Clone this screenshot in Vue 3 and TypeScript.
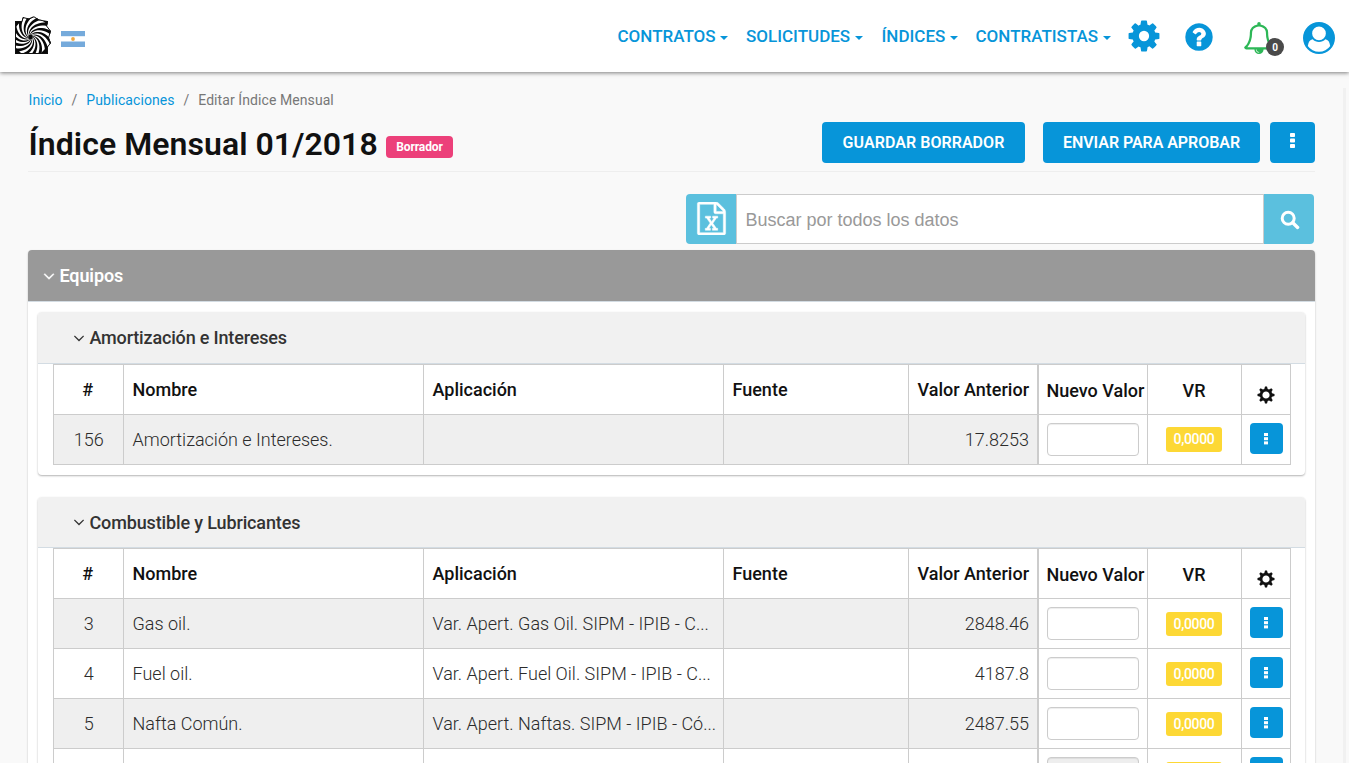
<script setup lang="ts">
interface Row {
  id: string
  nombre: string
  aplicacion: string
  anterior: string
  variacion: string
  disabled?: boolean
}
interface Group {
  title: string
  kind: string
  rows: Row[]
}

const menus: string[] = ['CONTRATOS', 'SOLICITUDES', 'ÍNDICES', 'CONTRATISTAS']

const groups: Group[] = [
  {
    title: 'Amortización e Intereses',
    kind: 'first',
    rows: [{ id: '156', nombre: 'Amortización e Intereses.', aplicacion: '', anterior: '17.8253', variacion: '0,0000' }],
  },
  {
    title: 'Combustible y Lubricantes',
    kind: 'second',
    rows: [
      { id: '3', nombre: 'Gas oil.', aplicacion: 'Var. Apert. Gas Oil. SIPM - IPIB - C...', anterior: '2848.46', variacion: '0,0000' },
      { id: '4', nombre: 'Fuel oil.', aplicacion: 'Var. Apert. Fuel Oil. SIPM - IPIB - C...', anterior: '4187.8', variacion: '0,0000' },
      { id: '5', nombre: 'Nafta Común.', aplicacion: 'Var. Apert. Naftas. SIPM - IPIB - Có...', anterior: '2487.55', variacion: '0,0000' },
      { id: '', nombre: '', aplicacion: '', anterior: '', variacion: '', disabled: true },
    ],
  },
]

// Spiral blades of the logo, from the hub outwards
const bladeCount = 14
function spiral(start: number, reach: number): string[] {
  const points: string[] = []
  for (let i = 0; i <= 14; i++) {
    const r = 1.5 + (reach * i) / 14
    const a = start + 2.1 * Math.sqrt(i / 14)
    points.push(`${(15.5 + r * Math.cos(a)).toFixed(2)} ${(21 + r * Math.sin(a)).toFixed(2)}`)
  }
  return points
}
const blades: string[] = Array.from({ length: bladeCount }, (_, n) => {
  const a = (n * 2 * Math.PI) / bladeCount
  const near = spiral(a, 23)
  const far = spiral(a + 0.23, 23).reverse()
  return `M${near.concat(far).join('L')}Z`
})

const teeth: number[] = [0, 45, 90, 135, 180, 225, 270, 315]
</script>

<template>
  <div class="page">
    <header class="topbar">
      <svg class="logo" width="38" height="40" viewBox="0 0 38 40">
        <defs>
          <clipPath id="logo-clip">
            <path d="M0 5H7L8 1L14 2.500L19 0L24 3.500L33 5L32 10L36 15L34 22L36 27L33 31V38H0Z" />
          </clipPath>
        </defs>
        <g clip-path="url(#logo-clip)">
          <rect width="38" height="40" fill="#fff" />
          <path v-for="(d, i) in blades" :key="i" :d="d" fill="#080808" />
          <path d="M0 5H6L0 12ZM28 5H33V9ZM33 30V38H25ZM0 31V38H7Z" fill="#080808" />
        </g>
        <path d="M.5 5.500V37.500H32.500V31L35.500 27L33.500 22L35.500 15L31.500 10L32.500 5.500L24 4L19 .8L14 3L8 1.500L7 5.500Z" fill="none" stroke="#111" stroke-width="1" />
        <circle cx="15.500" cy="21" r="2.200" fill="#080808" />
      </svg>
      <svg class="flag" width="24" height="16" viewBox="0 0 24 16">
        <rect width="24" height="16" fill="#fff" />
        <rect width="24" height="5.200" fill="#75aadb" />
        <rect y="10.500" width="24" height="5.500" fill="#75aadb" />
        <circle cx="12" cy="8" r="1.900" fill="#f0a840" />
      </svg>
      <nav class="menu">
        <a v-for="m in menus" :key="m" class="menu-item">{{ m }}<i class="caret"></i></a>
      </nav>
      <svg class="cog" width="36" height="36" viewBox="0 0 1792 1792"><path d="M1152 896q0-106-75-181t-181-75-181 75-75 181 75 181 181 75 181-75 75-181zm512-109v222q0 12-8 23t-20 13l-185 28q-19 54-39 91 35 50 107 138 10 12 10 25t-9 23q-27 37-99 108t-94 71q-12 0-26-9l-138-108q-44 23-91 38-16 136-29 186-7 28-36 28h-222q-14 0-24.500-8.500t-11.500-21.500l-28-184q-49-16-90-37l-141 107q-10 9-25 9-14 0-25-11-126-114-165-168-7-10-7-23 0-12 8-23 15-21 51-66.500t54-70.500q-27-50-41-99l-183-27q-13-2-21-12.500t-8-23.500v-222q0-12 8-23t19-13l186-28q14-46 39-92-40-57-107-138-10-12-10-24 0-10 9-23 26-36 98.500-107.500t94.500-71.500q13 0 26 10l138 107q44-23 91-38 16-136 29-186 7-28 36-28h222q14 0 24.500 8.500t11.500 21.500l28 184q49 16 90 37l142-107q9-9 24-9 13 0 25 10 129 119 165 170 7 8 7 22 0 12-8 23-15 21-51 66.500t-54 70.500q26 50 41 98l183 28q13 2 21 12.500t8 23.500z" fill="#0795d9" /></svg>
      <svg class="help" width="32" height="32" viewBox="0 0 1792 1792"><path d="M1024 1376v-192q0-14-9-23t-23-9h-192q-14 0-23 9t-9 23v192q0 14 9 23t23 9h192q14 0 23-9t9-23zm256-672q0-88-55.500-163t-138.500-116-170-41q-243 0-371 213-15 24 8 42l132 100q7 6 19 6 16 0 25-12 53-68 86-92 34-24 86-24 48 0 85.500 26t37.500 59q0 38-20 61t-68 45q-63 28-115.500 86.500t-52.500 125.500v36q0 14 9 23t23 9h192q14 0 23-9t9-23q0-19 21.500-49.500t54.500-49.500q32-18 49-28.500t46-35 44.500-48 28-60.500 12.500-81zm384 192q0 209-103 385.500t-279.500 279.500-385.500 103-385.500-103-279.500-279.500-103-385.500 103-385.500 279.500-279.500 385.500-103 385.500 103 279.500 279.500 103 385.500z" fill="#0795d9" /></svg>
      <div class="bell">
        <svg width="32" height="32" viewBox="0 0 1792 1792"><path d="M912 1696q0-16-16-16-59 0-101.500-42.500t-42.500-101.500q0-16-16-16t-16 16q0 73 51.500 124.500t124.500 51.500q16 0 16-16zm-666-288h1300q-266-300-266-832 0-51-24-105t-69-103-121.500-80.500-169.500-31.500-169.500 31.500-121.500 80.500-69 103-24 105q0 532-266 832zm1482 0q0 52-38 90t-90 38h-448q0 106-75 181t-181 75-181-75-75-181h-448q-52 0-90-38t-38-90q50-42 91-88t85-119.500 74.500-158.500 50-206 19.500-260q0-152 117-282.500t307-158.500q-8-19-8-39 0-40 28-68t68-28 68 28 28 68q0 20-8 39 190 28 307 158.500t117 282.500q0 139 19.500 260t50 206 74.500 158.500 85 119.500 91 88z" fill="#2db757" /></svg>
        <span class="count">0</span>
      </div>
      <svg class="user" width="32" height="32" viewBox="0 0 1792 1792"><path d="M1523 1339q-22-155-87.500-257.500t-184.500-118.500q-67 74-159.500 115.500t-195.500 41.500-195.500-41.500-159.500-115.500q-119 16-184.500 118.500t-87.500 257.500q106 150 271 237.500t356 87.500 356-87.500 271-237.500zm-243-699q0-159-112.500-271.500t-271.500-112.500-271.500 112.500-112.500 271.500 112.500 271.500 271.500 112.500 271.500-112.500 112.500-271.500zm512 256q0 182-71 347.500t-190.500 286-285.500 191.500-349 71-349-71-285.500-191.500-190.500-286-71-347.500 71-348 191-286 286-191 348-71 348 71 286 191 191 286 71 348z" fill="#0795d9" /></svg>
    </header>

    <div class="body">
      <main class="content">
        <div class="crumbs">
          <a>Inicio</a><span class="slash">/</span><a>Publicaciones</a><span class="slash">/</span><span>Editar Índice Mensual</span>
        </div>
        <div class="heading">
          <h1>Índice Mensual 01/2018</h1>
          <span class="state">Borrador</span>
          <div class="actions">
            <button class="btn save">GUARDAR BORRADOR</button>
            <button class="btn send">ENVIAR PARA APROBAR</button>
            <button class="btn more">
              <svg width="5" height="16" viewBox="0 0 5 16" fill="#fff"><rect width="5" height="4" rx=".8" /><rect y="5.500" width="5" height="4" rx=".8" /><rect y="11" width="5" height="4" rx=".8" /></svg>
            </button>
          </div>
        </div>

        <div class="search">
          <div class="excel">
            <svg width="33" height="33" viewBox="0 0 1792 1792"><path d="M1596 380q28 28 48 76t20 88v1152q0 40-28 68t-68 28h-1344q-40 0-68-28t-28-68v-1600q0-40 28-68t68-28h896q40 0 88 20t76 48zm-444-244v376h376q-10-29-22-41l-313-313q-12-12-41-22zm384 1528v-1024h-416q-40 0-68-28t-28-68v-416h-768v1536h1280zm-979-234v106h281v-106h-75l103-161q5-7 10-16.500t7.500-13.500 3.500-4h2q1 4 5 10 2 4 4.500 7.500t6 8 6.500 8.500l107 161h-76v106h291v-106h-68l-192-273 195-282h67v-107h-279v107h74l-103 159q-4 7-10 16.500t-9 13.500l-2 3h-2q-1-4-5-10-6-11-17-23l-106-159h76v-107h-290v107h68l189 272-194 283h-68z" fill="#fff" stroke="#fff" stroke-width="24" /></svg>
          </div>
          <input class="query" type="text" placeholder="Buscar por todos los datos" />
          <div class="find">
            <svg width="20" height="20" viewBox="0 0 20 20" fill="none" stroke="#fff"><circle cx="8.200" cy="8.200" r="6" stroke-width="3" /><path d="M12.800 12.800L17.600 17.400" stroke-width="3.400" stroke-linecap="round" /></svg>
          </div>
        </div>

        <section class="panel">
          <div class="panel-head">
            <svg class="angle" width="18" height="18" viewBox="0 0 1792 1792"><path d="M1395 736q0 13-10 23l-466 466q-10 10-23 10t-23-10l-466-466q-10-10-10-23t10-23l50-50q10-10 23-10t23 10l393 393 393-393q10-10 23-10t23 10l50 50q10 10 10 23z" fill="currentColor" stroke="currentColor" stroke-width="30" /></svg>
            <span class="panel-title">Equipos</span>
          </div>
          <div v-for="g in groups" :key="g.title" class="card" :class="g.kind">
            <div class="card-head">
              <svg class="angle" width="18" height="18" viewBox="0 0 1792 1792"><path d="M1395 736q0 13-10 23l-466 466q-10 10-23 10t-23-10l-466-466q-10-10-10-23t10-23l50-50q10-10 23-10t23 10l393 393 393-393q10-10 23-10t23 10l50 50q10 10 10 23z" fill="currentColor" /></svg>
              <span class="card-title">{{ g.title }}</span>
            </div>
            <div class="table">
              <div class="row head">
                <div class="cell num">#</div>
                <div class="cell">Nombre</div>
                <div class="cell">Aplicación</div>
                <div class="cell">Fuente</div>
                <div class="cell right">Valor Anterior</div>
                <div class="cell edit lower">Nuevo Valor</div>
                <div class="cell mid lower">VR</div>
                <div class="cell mid">
                  <svg class="gear" width="18" height="18" viewBox="-9 -9 18 18">
                    <circle r="4.900" fill="none" stroke="#111" stroke-width="2.600" />
                    <path v-for="t in teeth" :key="t" d="M-1.900 -5.200L-1 -8.500H1L1.900 -5.200Z" :transform="`rotate(${t})`" fill="#111" />
                  </svg>
                </div>
              </div>
              <div v-for="(r, i) in g.rows" :key="i" class="row" :class="{ striped: i % 2 === 0 }">
                <div class="cell num">{{ r.id }}</div>
                <div class="cell">{{ r.nombre }}</div>
                <div class="cell">{{ r.aplicacion }}</div>
                <div class="cell"></div>
                <div class="cell right">{{ r.anterior }}</div>
                <div class="cell edit"><input class="value" type="text" :disabled="r.disabled" /></div>
                <div class="cell mid"><span class="variation">{{ r.variacion }}</span></div>
                <div class="cell act">
                  <button class="dots">
                    <svg width="4" height="12" viewBox="0 0 4 12" fill="#fff"><rect width="4" height="3" /><rect y="4.200" width="4" height="3" /><rect y="8.400" width="4" height="3" /></svg>
                  </button>
                </div>
              </div>
            </div>
          </div>
        </section>
      </main>
    </div>
  </div>
</template>

<style>
html,
body {
  margin: 0;
  overflow: hidden;
  background: #f9f9f9;
}
</style>

<style scoped>
* {
  box-sizing: border-box;
}
.page {
  height: 763px;
  overflow: hidden;
  display: flex;
  flex-direction: column;
  background: #f9f9f9;
  font-family: Roboto, "Liberation Sans", sans-serif;
  color: #111;
}
.topbar {
  flex: none;
  height: 72px;
  display: flex;
  align-items: flex-start;
  background: #fff;
  box-shadow: 0 1px 4px rgba(0, 0, 0, 0.5);
  z-index: 1;
}
.logo {
  margin: 16px 0 0 15px;
}
.flag {
  margin: 31px 0 0 8px;
}
.menu {
  margin-left: 532.5px;
  display: grid;
  grid-template-columns: 128.5px 135.5px 94px 153px;
  font-size: 17px;
  font-weight: 500;
  color: #0795d9;
  line-height: 20px;
  padding-top: 26px;
}
.menu-item {
  display: flex;
  align-items: center;
  white-space: nowrap;
}
.caret {
  margin: 3px 0 0 4.5px;
  border: 4px solid transparent;
  border-top-color: #0795d9;
  border-bottom: 0;
}
.cog {
  margin: 18px 0 0 -2.5px;
}
.help {
  margin: 21px 0 0 21px;
}
.bell {
  position: relative;
  margin: 21.5px 0 0 28px;
  width: 32px;
  height: 32px;
}
.count {
  position: absolute;
  left: 23px;
  top: 16.5px;
  width: 18px;
  height: 18px;
  border-radius: 9px;
  background: #4a4a4a;
  color: #fff;
  font-size: 10px;
  font-weight: 700;
  line-height: 20px;
  text-align: center;
}
.user {
  margin: 21.5px 0 0 28px;
}
.body {
  flex: 1;
  min-height: 0;
  margin-top: 16px;
  margin-right: 3px;
  border-right: 3px solid #f1f1f1;
}
.content {
  width: 1287px;
  margin-left: 28px;
}
.crumbs {
  height: 34px;
  padding-left: 0.5px;
  line-height: 24px;
  font-size: 14px;
  letter-spacing: 0.08px;
  color: #777;
  white-space: nowrap;
}
.crumbs a {
  color: #0795d9;
}
.slash {
  margin: 0 8.9px;
}
.heading {
  height: 50px;
  display: flex;
  align-items: flex-start;
  border-bottom: 1px solid #eee;
}
h1 {
  margin: 2px 0 0 0.5px;
  font-size: 32px;
  line-height: 40px;
  font-weight: 600;
  letter-spacing: 0.06px;
  width: 349.5px;
  white-space: nowrap;
}
.state {
  margin: 14px 0 0 8px;
  width: 67px;
  height: 22px;
  border-radius: 4px;
  background: #ec407a;
  color: #fff;
  font-size: 12px;
  font-weight: 700;
  letter-spacing: -0.08px;
  line-height: 23px;
  text-align: center;
}
.actions {
  margin-left: auto;
  display: flex;
}
.btn {
  height: 41px;
  padding: 0;
  border: 0;
  border-radius: 4px;
  background: #0795d9;
  color: #fff;
  font: 600 16px/41px Roboto, "Liberation Sans", sans-serif;
  white-space: nowrap;
}
.save {
  width: 203px;
  letter-spacing: 0.05px;
}
.send {
  width: 217px;
  margin-left: 18px;
  letter-spacing: -0.05px;
}
.more {
  width: 45px;
  margin-left: 10px;
  display: flex;
  align-items: flex-start;
  justify-content: center;
  padding-top: 11px;
}
.search {
  display: flex;
  width: 628px;
  height: 50px;
  margin: 22px 1px 6px auto;
}
.excel,
.find {
  width: 50px;
  background: #5bc0de;
  display: flex;
  align-items: center;
  justify-content: center;
}
.excel {
  border-radius: 4px 0 0 4px;
  padding: 0 0 1px 1px;
}
.find {
  border-radius: 0 4px 4px 0;
  padding: 1px 0 0 1px;
}
.query {
  flex: 1;
  min-width: 0;
  border: 1px solid #ccc;
  background: #fff;
  padding: 2px 8px 0 8.5px;
  font: 18px "Liberation Sans", Arial, sans-serif;
  outline: 0;
}
.query::placeholder {
  color: #999;
}
.panel {
  height: 700px;
  background: #fff;
  border-radius: 4px;
  box-shadow: 0 1px 2px rgba(0, 0, 0, 0.25);
}
.panel-head {
  height: 52px;
  display: flex;
  align-items: center;
  padding-left: 12px;
  background: #999;
  border-bottom: 1px solid #d3dce3;
  border-radius: 4px 4px 0 0;
  color: #fff;
}
.panel-title {
  margin-left: 1.5px;
  font-size: 18px;
  font-weight: 600;
  letter-spacing: -0.12px;
}
.card {
  width: 1267px;
  margin: 10px 0 0 9.5px;
  background: #fff;
  border-radius: 4px;
  box-shadow: 0 1px 2px rgba(0, 0, 0, 0.3);
}
.first {
  height: 163px;
}
.second {
  height: 400px;
  margin-top: 22px;
}
.card-head {
  height: 52px;
  display: flex;
  align-items: center;
  padding-left: 32.5px;
  background: #f1f1f1;
  border-bottom: 1px solid #d3dce3;
  border-radius: 4px 4px 0 0;
  color: #333;
}
.second .card-head {
  height: 51px;
}
.card-title {
  margin-left: 1.5px;
  font-size: 18px;
  font-weight: 500;
  letter-spacing: -0.17px;
}
.second .card-title {
  letter-spacing: -0.14px;
}
.table {
  width: 1238px;
  margin-left: 15.5px;
  border: 1px solid #ccc;
  border-width: 1px 0 0 1px;
}
.row {
  display: grid;
  grid-template-columns: 70px 300px 300px 185px 129px 110px 94px 49px;
  height: 50px;
  font-size: 18px;
  font-weight: 300;
  color: #2b2b2b;
}
.head {
  font-weight: 500;
  color: #111;
}
.cell {
  border: 1px solid #ccc;
  border-width: 0 1px 1px 0;
  padding: 0 8px 0 8.5px;
  line-height: 49px;
  white-space: nowrap;
  overflow: hidden;
}
.striped .cell:nth-child(-n + 5) {
  background: #efefef;
}
.num {
  text-align: center;
}
.head .num {
  padding-right: 10px;
}
.right {
  text-align: right;
}
.edit {
  border-left-width: 1px;
  padding: 0 0 0 8px;
}
.head .edit {
  padding-left: 7.5px;
}
.mid {
  padding: 0 9px 0 8px;
  text-align: center;
}
.lower {
  line-height: 51px;
}
.gear {
  display: block;
  margin: 21px 0 0 6.5px;
}
.value {
  display: block;
  width: 92px;
  height: 33px;
  margin-top: 8px;
  border: 1px solid #ccc;
  border-radius: 4px;
  background: #fff;
  box-shadow: inset 0 1px 1px rgba(0, 0, 0, 0.075);
}
.value:disabled {
  background: #eee;
}
.variation {
  display: block;
  width: 56px;
  height: 24px;
  margin: 13px 0 0 10px;
  border-radius: 3px;
  background: #fdd835;
  color: #fff;
  font-size: 14px;
  font-weight: 500;
  letter-spacing: -0.35px;
  line-height: 24px;
}
.first .variation {
  height: 25px;
  margin-top: 12px;
}
.act {
  padding: 8px 0 0 8px;
}
.dots {
  display: flex;
  align-items: flex-start;
  justify-content: center;
  width: 33px;
  height: 31px;
  padding: 10px 1.5px 0 0;
  border: 0;
  border-radius: 4px;
  background: #0795d9;
}
</style>
